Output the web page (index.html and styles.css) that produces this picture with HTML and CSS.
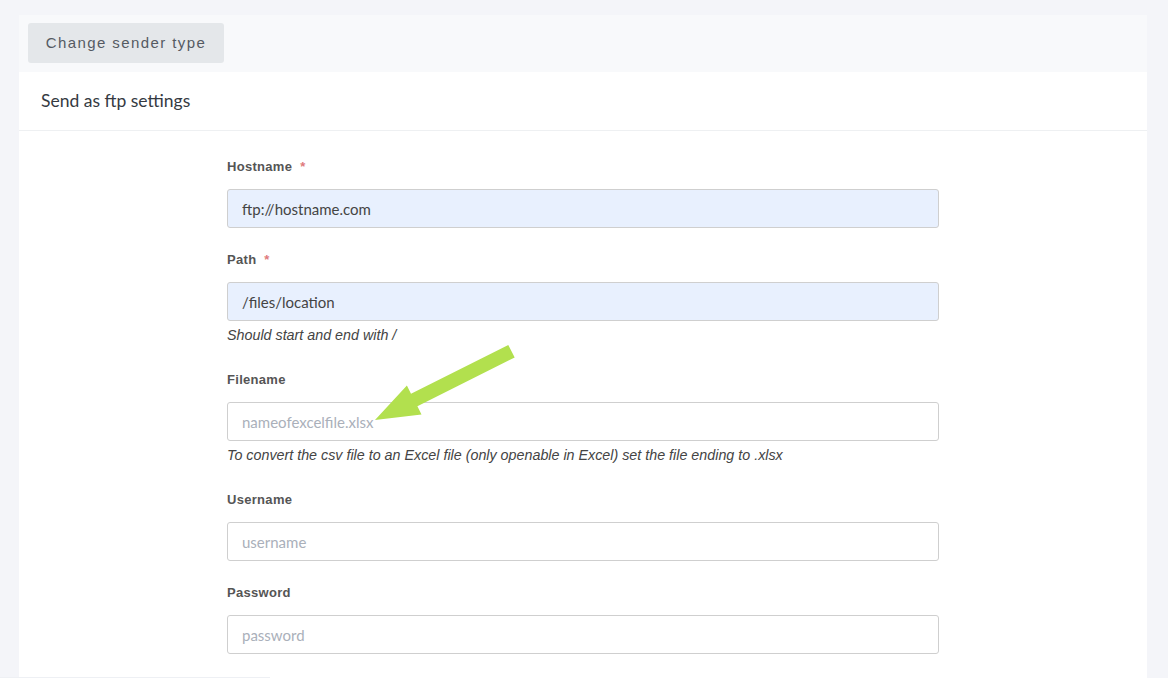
FILE: index.html
```html
<!DOCTYPE html>
<html lang="en">
<head>
    <meta charset="UTF-8">
    <meta name="viewport" content="width=device-width, initial-scale=1.0">
    <title>Sender settings</title>
    <link rel="stylesheet" href="styles.css">
</head>
<body>
    <div class="card">
        <div class="toolbar">
            <button class="btn-change">Change sender type</button>
        </div>
        <div class="card-header">Send as ftp settings</div>
        <div class="card-body">
            <form class="ftp-form">
                <div class="field">
                    <label>Hostname <span class="req">*</span></label>
                    <input class="filled" type="text" value="ftp://hostname.com">
                </div>
                <div class="field">
                    <label>Path <span class="req">*</span></label>
                    <input class="filled" type="text" value="/files/location">
                    <p class="help">Should start and end with /</p>
                </div>
                <div class="field">
                    <label>Filename</label>
                    <input type="text" placeholder="nameofexcelfile.xlsx">
                    <p class="help">To convert the csv file to an Excel file (only openable in Excel) set the file ending to .xlsx</p>
                </div>
                <div class="field">
                    <label>Username</label>
                    <input type="text" placeholder="username">
                </div>
                <div class="field">
                    <label>Password</label>
                    <input type="password" placeholder="password">
                </div>
            </form>
        </div>
    </div>

    <!-- annotation arrow pointing at the filename field -->
    <svg class="arrow" viewBox="370 340 150 85" width="150" height="85">
        <polygon points="508.3,345.1 514.7,357.5 417.4,406.3 421.5,414.6 375,420 406.9,385.6 411,393.8" fill="#b2e04e"/>
    </svg>

    <div class="bottom-line"></div>
</body>
</html>
```

FILE: styles.css
```css
* {
    margin: 0;
    padding: 0;
    box-sizing: border-box;
}
body {
    background-color: #f4f5f9;
    padding: 15px 21px 0 19px;
    font-family: "Liberation Sans", Arial, sans-serif;
    overflow: hidden;
    height: 678px;
}
.card {
    background-color: #fff;
    min-height: 663px;
}
.toolbar {
    background-color: #f8f9fb;
    padding: 8px 9px;
    height: 57px;
}
.btn-change {
    height: 40px;
    width: 196px;
    padding-bottom: 2px;
    border: none;
    border-radius: 3px;
    background-color: #e4e7ea;
    color: #555a62;
    font-family: "Liberation Sans", Arial, sans-serif;
    font-size: 15px;
    letter-spacing: 1.4px;
}
.card-header {
    height: 59px;
    padding: 0 22px 2px;
    display: flex;
    align-items: center;
    border-bottom: 1px solid #eef0f2;
    font-family: Lato, sans-serif;
    font-size: 17.5px;
    color: #353a42;
}
.card-body {
    padding-top: 26px;
}
.ftp-form {
    width: 712px;
    margin: 0 auto;
}
.field {
    margin-bottom: 22px;
}
.field label {
    display: block;
    height: 20px;
    line-height: 20px;
    margin-bottom: 12px;
    font-size: 13px;
    font-weight: bold;
    letter-spacing: 0.3px;
    color: #555;
}
.req {
    color: #e07a7c;
    margin-left: 4px;
}
.field input {
    display: block;
    width: 100%;
    height: 39px;
    padding: 0 14px;
    border: 1px solid #cfcfcf;
    border-radius: 3px;
    background-color: #fff;
    font-family: Lato, sans-serif;
    font-size: 15px;
    color: #444;
    outline: none;
}
.field input.filled {
    background-color: #e8f0fe;
}
.field input::placeholder {
    color: #aab0ba;
}
.help {
    margin-top: 4px;
    padding-bottom: 3px;
    line-height: 20px;
    font-size: 14.3px;
    font-style: italic;
    color: #444;
}
.arrow {
    position: absolute;
    left: 370px;
    top: 340px;
}
.bottom-line {
    position: fixed;
    left: 0;
    bottom: 0;
    width: 270px;
    height: 1px;
    background-color: #eef0f4;
}
```
